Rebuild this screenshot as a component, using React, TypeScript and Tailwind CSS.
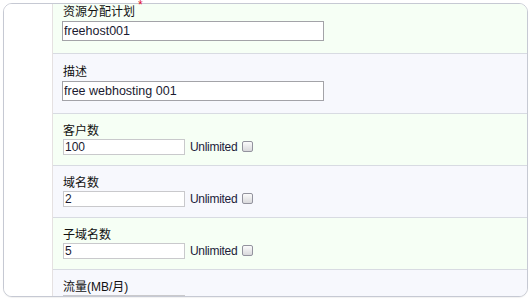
import React from 'react';

const cjk = "font-['Liberation_Sans','Noto_Sans_CJK_SC',sans-serif]";

type Field = {
  label: string;
  value: string;
  wide?: boolean;
  bg: string;
  required?: boolean;
};

const fields: Field[] = [
  { label: '资源分配计划', value: 'freehost001', wide: true, bg: 'bg-[#f6fff5]', required: true },
  { label: '描述', value: 'free webhosting 001', wide: true, bg: 'bg-[#f7f8fd]' },
  { label: '客户数', value: '100', bg: 'bg-[#f6fff5]' },
  { label: '域名数', value: '2', bg: 'bg-[#f7f8fd]' },
  { label: '子域名数', value: '5', bg: 'bg-[#f6fff5]' },
  { label: '流量(MB/月)', value: '', bg: 'bg-[#f7f8fd]' },
];

function Checkbox() {
  return (
    <span className="ml-[5px] mt-[2px] self-start w-[11px] h-[11px] rounded-[2px] border border-[#93939e] bg-linear-to-b from-[#fbfbfb] to-[#d9d9dc]" />
  );
}

function Row({ f }: { f: Field }) {
  if (f.wide) {
    return (
      <div className={`${f.bg} pt-[10px] pb-[12px] pl-[9px] border-b border-[#d8dbe2]`}>
        <div className={`${cjk} text-[12px] leading-[17px] h-[17px] text-[#111] pl-px`}>
          {f.label}
        </div>
        <input
          readOnly
          value={f.value}
          className="block w-[262px] h-[20px] border border-[#a3a3a8] bg-white pl-px font-['Liberation_Sans',sans-serif] text-[12.5px] leading-[18px] text-[#1a1a30] outline-none"
        />
      </div>
    );
  }
  return (
    <div className={`${f.bg} pt-[10px] pb-[10px] pl-[9px] border-b border-[#d8dbe2]`}>
      <div className={`${cjk} text-[12px] leading-[15px] h-[15px] text-[#111] pl-px`}>
        {f.label}
      </div>
      <div className="flex items-center h-[16px]">
        <input
          readOnly
          value={f.value}
          className="block ml-px w-[122px] h-[16px] border border-[#c9c9cc] bg-white pl-px font-['Liberation_Sans',sans-serif] text-[12px] leading-[14px] text-[#1a1a30] outline-none"
        />
        <span className="ml-[5px] font-['Liberation_Sans',sans-serif] text-[12px] tracking-[-0.3px] leading-[16px] text-[#1c1c3a]">
          Unlimited
        </span>
        <Checkbox />
      </div>
    </div>
  );
}

export default function App() {
  return (
    <div className="relative w-[530px] h-[300px] bg-white pt-[3px] pl-[3px]">
      <div className="w-[525px] h-[294px] border border-[#c6c9d3] rounded-[9px] overflow-hidden flex bg-white shadow-[0_1px_1px_rgba(0,0,0,0.06)]">
        <div className="w-[49px] shrink-0 border-r border-[#e5e1e1] bg-white" />
        <div className="flex-1 min-w-0">
          <div className="-mt-[10px]">
            {fields.map((f) => (
              <Row key={f.label} f={f} />
            ))}
          </div>
        </div>
      </div>
      {/* required mark, mostly cut off above the frame */}
      <span className="absolute left-[138px] top-[-1px] h-[6px] overflow-hidden font-['Liberation_Sans',sans-serif] text-[12px] leading-[12px] text-[#e0102a]">
        *
      </span>
    </div>
  );
}
